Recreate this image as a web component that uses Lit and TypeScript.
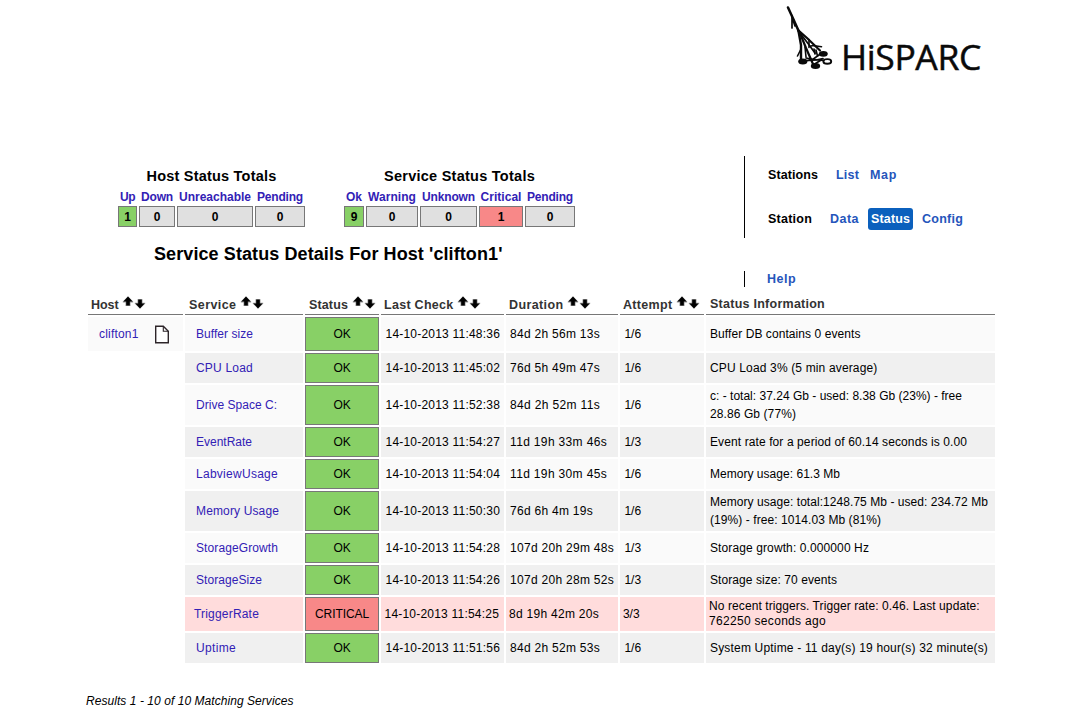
import { LitElement, html, css, svg, nothing } from "lit";
import { customElement } from "lit/decorators.js";

const FAMILY = '"Liberation Sans", Arial, sans-serif';
const ctx = document.createElement("canvas").getContext("2d")!;

/** Spreads the letters of a label so that it takes up the given width. */
function label(text: string, width: number, font = "12px") {
  ctx.font = `${font} ${FAMILY}`;
  const spacing = (width - ctx.measureText(text).width) / text.length;
  return html`<span class="label" style="letter-spacing:${spacing.toFixed(3)}px">${text}</span>`;
}

type Total = [name: string, nameWidth: number, count: string, boxWidth: number, tone?: string];
const hostTotals: Total[] = [
  ["Up", 15, "1", 19, "ok"],
  ["Down", 32, "0", 36],
  ["Unreachable", 72, "0", 76],
  ["Pending", 46, "0", 50],
];
const serviceTotals: Total[] = [
  ["Ok", 16, "9", 20, "ok"],
  ["Warning", 48, "0", 52],
  ["Unknown", 53, "0", 57],
  ["Critical", 41, "1", 44, "critical"],
  ["Pending", 46, "0", 50],
];

type Column = [name: string, width: number, sortable: boolean];
const columns: Column[] = [
  ["Host", 27.5, true],
  ["Service", 47.5, true],
  ["Status", 39, true],
  ["Last Check", 69.5, true],
  ["Duration", 54.5, true],
  ["Attempt", 49.5, true],
  ["Status Information", 115, false],
];

interface Row {
  name: [string, number];
  time: string;
  duration: [string, number];
  attempt: string;
  info: [string, number][];
  critical?: boolean;
}
const rows: Row[] = [
  { name: ["Buffer size", 57], time: "11:48:36", duration: ["84d 2h 56m 13s", 90], attempt: "1/6", info: [["Buffer DB contains 0 events", 150.5]] },
  { name: ["CPU Load", 57], time: "11:45:02", duration: ["76d 5h 49m 47s", 90], attempt: "1/6", info: [["CPU Load 3% (5 min average)", 167.5]] },
  { name: ["Drive Space C:", 81], time: "11:52:38", duration: ["84d 2h 52m 11s", 90], attempt: "1/6", info: [["c: - total: 37.24 Gb - used: 8.38 Gb (23%) - free", 252], ["28.86 Gb (77%)", 86]] },
  { name: ["EventRate", 56], time: "11:54:27", duration: ["11d 19h 33m 46s", 97], attempt: "1/3", info: [["Event rate for a period of 60.14 seconds is 0.00", 257]] },
  { name: ["LabviewUsage", 82], time: "11:54:04", duration: ["11d 19h 30m 45s", 97], attempt: "1/6", info: [["Memory usage: 61.3 Mb", 130]] },
  { name: ["Memory Usage", 83], time: "11:50:30", duration: ["76d 6h 4m 19s", 83], attempt: "1/6", info: [["Memory usage: total:1248.75 Mb - used: 234.72 Mb", 278], ["(19%) - free: 1014.03 Mb (81%)", 171]] },
  { name: ["StorageGrowth", 82], time: "11:54:28", duration: ["107d 20h 29m 48s", 104], attempt: "1/3", info: [["Storage growth: 0.000000 Hz", 159]] },
  { name: ["StorageSize", 66], time: "11:54:26", duration: ["107d 20h 28m 52s", 104], attempt: "1/3", info: [["Storage size: 70 events", 127]] },
  { name: ["TriggerRate", 65], time: "11:54:25", duration: ["8d 19h 42m 20s", 90], attempt: "3/3", info: [["No recent triggers. Trigger rate: 0.46. Last update:", 271], ["762250 seconds ago", 117]], critical: true },
  { name: ["Uptime", 40], time: "11:51:56", duration: ["84d 2h 52m 53s", 90], attempt: "1/6", info: [["System Uptime - 11 day(s) 19 hour(s) 32 minute(s)", 278]] },
];

const sortArrows = html`<svg class="arrows" width="24" height="14" viewBox="0 0 24 14">
  <path d="M6 .3 .8 5.400v1h2.700v3.500h5V6.400h2.700v-1z" fill="#444" opacity=".55" />
  <path d="M6 .6 1.400 5.600h2.800v4h3.600v-4h2.800z" fill="#000" />
  <path d="M18 12.700l5.200-5v-1h-2.700V3.200h-5v3.500h-2.700v1z" fill="#444" opacity=".55" />
  <path d="M18 12.400l4.600-5h-2.800v-4h-3.600v4h-2.800z" fill="#000" />
</svg>`;

const shower = svg`
  <g fill="none" stroke="#0a0a0a" stroke-linecap="round">
    <path d="M4 2.500 9.500 14.500 16 29" stroke-width="2.500" />
    <path d="M8 10.500V23M8.300 13l2.700 8" stroke-width="1.700" />
    <path d="M14 25 23 33 36 45.500" stroke-width="2.200" />
    <path d="M14.500 26 24 38.500 31 48" stroke-width="1.700" />
    <path d="M14.500 26 17 40v14.500" stroke-width="2.400" />
    <path d="M15.500 27 22 43l7 16" stroke-width="2.200" />
    <path d="M25 34.500v8M25 41.500l4-1 8.500 1.200M30 44l1 5M17 44l-3.500 7M21 42l1 10M32 45l1.500 6" stroke-width="1.600" />
    <path d="M17 56 28 55l9-6.500M18 56l14-1 7-1.500M29 60l9-5.500M22 53l10 2" stroke-width="1.700" />
    <ellipse cx="43.300" cy="56.400" rx="3.900" ry="2.300" stroke-width="1.900" />
    <path d="M31 54.500l8 1" stroke-width="1.700" />
  </g>
  <g fill="#0a0a0a">
    <ellipse cx="18.800" cy="56.500" rx="4.600" ry="3" />
    <ellipse cx="31.500" cy="61" rx="4.700" ry="3" />
    <ellipse cx="39.300" cy="48.800" rx="4.500" ry="2.900" />
  </g>`;

@customElement("app-root")
export class AppRoot extends LitElement {
  static styles = css`
    :host {
      display: block;
      width: 1075px;
      height: 717px;
      overflow: hidden;
      background: #fff;
      color: #000;
      font: 12px/18px "Liberation Sans", Arial, sans-serif;
      box-sizing: border-box;
    }
    * { box-sizing: border-box; }
    .label { white-space: nowrap; }
    .brand { display: flex; height: 156px; padding-left: 784px; }
    .shower { flex: none; margin-top: 6px; margin-right: 12px; }
    .wordmark { font: 35.5px/40px "Open Sans", sans-serif; margin: 36px 0 0 -5px; color: #0a0a0a; letter-spacing: -0.4px; -webkit-text-stroke: 0.5px #0a0a0a; }
    .top { display: flex; height: 141px; }
    .summary { width: 744px; flex: none; }
    .groups { display: flex; padding-left: 118px; height: 84px; }
    .group { display: flex; flex-direction: column; align-items: center; margin-right: 39px; }
    .group h2 { margin: 11px 0 0; font: bold 14.5px/18px "Liberation Sans", Arial, sans-serif; }
    .totals { display: flex; gap: 2px; }
    .total { display: flex; flex-direction: column; align-items: center; }
    .total a { color: #3221b5; font-weight: bold; line-height: 16px; height: 21px; padding-top: 4px; }
    .count { width: 100%; height: 21px; border: 1px solid #777; background: #e0e0e0; font-weight: bold; text-align: center; line-height: 20px; }
    .ok { background: #88d066; }
    .critical { background: #f88888; }
    .title { margin: 4px 0 0 154px; font: bold 18px/20px "Liberation Sans", Arial, sans-serif; }
    .nav { font-weight: bold; font-size: 12.5px; }
    .menu { border-left: 1px solid #000; height: 82px; padding: 8px 0 0 23px; }
    .line { display: flex; align-items: center; height: 22px; margin-bottom: 22px; }
    .line a, .help { color: #2555bb; }
    .list { margin-left: 18px; }
    .map { margin-left: 11px; }
    .data { margin-left: 18px; }
    .line .active { background: #0b60bd; color: #fff; border-radius: 3px; height: 22px; width: 45px; margin: 0 9px 0; display: flex; align-items: center; justify-content: center; }
    .help { border-left: 1px solid #000; height: 16px; line-height: 17px; margin-top: 33px; padding-left: 22px; display: block; }
    .table { display: grid; grid-template-columns: 95px 118px 74px 123px 112px 84px 289px; gap: 2px; margin-left: 88px; margin-top: -3px; }
    .head { height: 21px; border-bottom: 1px solid #777; color: #333; font-weight: bold; font-size: 12.5px; display: flex; padding-left: 3px; line-height: 23px; }
    .head.svc { padding-left: 4px; }
    .head.plain { line-height: 21px; padding-left: 4px; }
    .arrows { flex: none; margin: 2px 0 0 3.5px; }
    .cell { display: flex; align-items: center; min-height: 30px; background: #fafafa; padding-left: 4px; }
    .even { background: #f0f0f0; }
    .red { background: #ffdcdc; }
    .first { min-height: 34px; }
    .two { min-height: 40px; }
    .cell.red { min-height: 34px; }
    .cell a { color: #3221b5; }
    .name { padding-left: 11px; }
    .red.name { padding-left: 9px; }
    .date { padding-left: 4.5px; }
    .attempt { padding-left: 4.5px; }
    .red.date { padding-left: 3.5px; }
    .red.duration, .red.attempt, .red.info { padding-left: 3px; }
    .red.info { line-height: 15px; }
    .state { border: 1px solid #777; justify-content: center; padding: 0; }
    .state.ok { background: #88d066; }
    .state.critical { background: #f88888; }
    .info { flex-direction: column; align-items: flex-start; justify-content: center; }
    .host { padding-left: 11px; }
    .page { margin-left: 15px; margin-top: 0; }
    .results { margin: 29px 0 0 86px; font-style: italic; }
  `;

  private group(title: string, width: number, totals: Total[]) {
    return html`<section class="group">
      <h2>${label(title, width, "bold 14.5px")}</h2>
      <div class="totals">
        ${totals.map(([name, w, count, box, tone]) => html`<div class="total" style="width:${box}px">
          <a>${label(name, w, "bold 12px")}</a>
          <div class="count ${tone ?? ""}">${count}</div>
        </div>`)}
      </div>
    </section>`;
  }

  private row(r: Row, i: number) {
    const tone = `${r.critical ? "red" : i % 2 ? "even" : ""} ${i === 0 ? "first" : ""} ${r.info.length > 1 && !r.critical ? "two" : ""}`;
    return html`
      ${i === 0
        ? html`<div class="cell host first"><a>${label("clifton1", 39.5)}</a>
            <svg class="page" width="16" height="19" viewBox="0 0 16 19" fill="none" stroke="#2d2529" stroke-width="1.400">
              <path d="M1.700 1.200h7.600l5 5v11.600H1.700z" fill="#fff" /><path d="M9.300 1.200v5h5" stroke-width="1.100" />
            </svg></div>`
        : html`<div></div>`}
      <div class="cell name ${tone}"><a>${label(...r.name)}</a></div>
      <div class="cell ${tone} state ${r.critical ? "critical" : "ok"}">${r.critical ? label("CRITICAL", 54) : label("OK", 17)}</div>
      <div class="cell date ${tone}">${label("14-10-2013 " + r.time, 114.5)}</div>
      <div class="cell duration ${tone}">${label(...r.duration)}</div>
      <div class="cell attempt ${tone}">${label(r.attempt, 16.5)}</div>
      <div class="cell info ${tone}">${r.info.map(([t, w]) => label(t, w))}</div>`;
  }

  render() {
    const nav = (t: string, w: number) => label(t, w, "bold 12.5px");
    return html`
      <header class="brand">
        <svg class="shower" width="50" height="66" viewBox="0 0 50 66"><g transform="translate(0,-1)">${shower}</g></svg>
        <div class="wordmark">HiSPARC</div>
      </header>
      <div class="top">
        <div class="summary">
          <div class="groups">
            ${this.group("Host Status Totals", 130, hostTotals)}
            ${this.group("Service Status Totals", 151, serviceTotals)}
          </div>
          <h1 class="title">${label("Service Status Details For Host 'clifton1'", 348.5, "bold 18px")}</h1>
        </div>
        <nav class="nav">
          <div class="menu">
            <div class="line">${nav("Stations", 50)}<a class="list">${nav("List", 23)}</a><a class="map">${nav("Map", 27)}</a></div>
            <div class="line">${nav("Station", 44)}<a class="data">${nav("Data", 29)}</a><a class="active">${nav("Status", 39)}</a><a>${nav("Config", 41)}</a></div>
          </div>
          <a class="help">${nav("Help", 29)}</a>
        </nav>
      </div>
      <main class="table">
        ${columns.map(([name, w, sortable], i) => html`<div class="head ${i === 1 || i === 2 ? "svc" : ""} ${sortable ? "" : "plain"}">
          ${label(name, w, "bold 12.5px")}${sortable ? sortArrows : nothing}</div>`)}
        ${rows.map((r, i) => this.row(r, i))}
      </main>
      <footer class="results">${label("Results 1 - 10 of 10 Matching Services", 207.5, "italic 12px")}</footer>
    `;
  }
}
